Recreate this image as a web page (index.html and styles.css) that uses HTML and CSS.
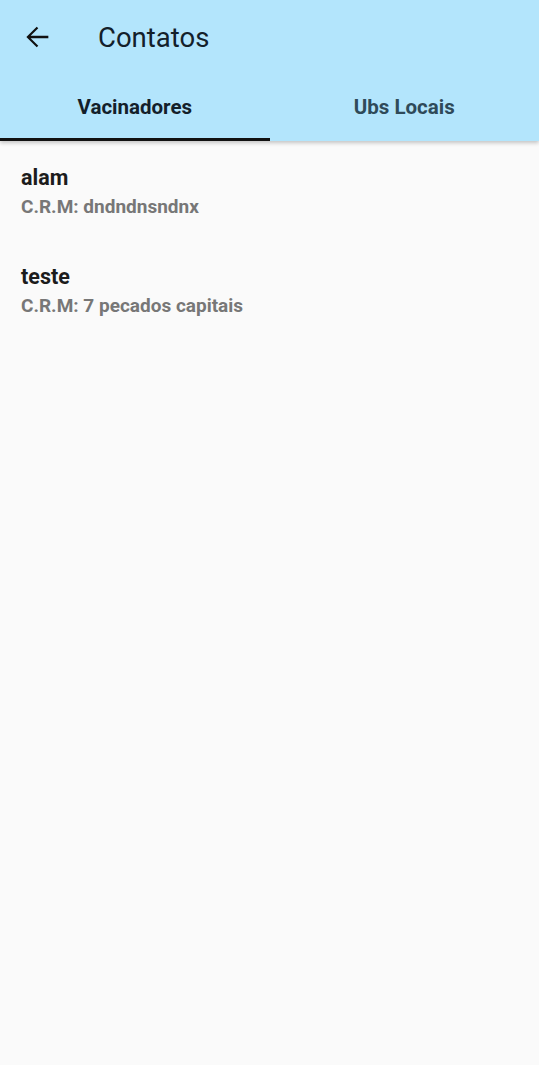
FILE: index.html
```html
<!DOCTYPE html>
<html lang="pt">
<head>
<meta charset="utf-8">
<link rel="stylesheet" href="styles.css">
</head>
<body>
<header class="appbar">
  <div class="toolbar">
    <button class="back" aria-label="Voltar">
      <svg width="34" height="34" viewBox="0 0 24 24"><path d="M20 11.2H7.5l5.4-5.4-1.1-1.1L4.5 12l7.3 7.3 1.1-1.1-5.4-5.4H20z" fill="#111"/></svg>
    </button>
    <h1 class="title">Contatos</h1>
  </div>
  <nav class="tabs">
    <div class="tab active">Vacinadores</div>
    <div class="tab">Ubs Locais</div>
  </nav>
</header>
<main class="list">
  <div class="item">
    <div class="name">alam</div>
    <div class="sub">C.R.M: dndndnsndnx</div>
  </div>
  <div class="item">
    <div class="name">teste</div>
    <div class="sub">C.R.M: 7 pecados capitais</div>
  </div>
</main>
</body>
</html>
```
FILE: styles.css
```css
html, body {
  margin: 0;
  padding: 0;
}
body {
  width: 539px;
  height: 1065px;
  background: #fafafa;
  font-family: Roboto, "Noto Sans", sans-serif;
  overflow: hidden;
}
.appbar {
  background: #b3e5fc;
  box-shadow: 0 2px 4px rgba(0,0,0,0.22);
  position: relative;
  z-index: 1;
}
.toolbar {
  height: 74px;
  display: flex;
  align-items: center;
}
.back {
  border: 0;
  background: none;
  padding: 0;
  margin-left: 20px;
  width: 34px;
  height: 34px;
  display: flex;
  align-items: center;
  justify-content: center;
}
.title {
  margin: 0 0 0 44px;
  font-size: 27.5px;
  font-weight: 400;
  color: #13202a;
}
.tabs {
  display: flex;
  height: 67px;
}
.tab {
  flex: 1;
  display: flex;
  align-items: center;
  justify-content: center;
  font-size: 20.5px;
  font-weight: 700;
  color: #2f4a59;
  padding-top: 1px;
  border-bottom: 3px solid transparent;
  box-sizing: border-box;
}
.tab.active {
  color: #13202a;
  border-bottom-color: #111;
}
.list {
  padding-top: 24px;
}
.item {
  padding: 0 21px;
  height: 99px;
}
.name {
  font-size: 21.5px;
  font-weight: 700;
  color: #1c1c1c;
  line-height: 26px;
}
.sub {
  font-size: 19px;
  font-weight: 700;
  color: #777;
  line-height: 32px;
}
```
